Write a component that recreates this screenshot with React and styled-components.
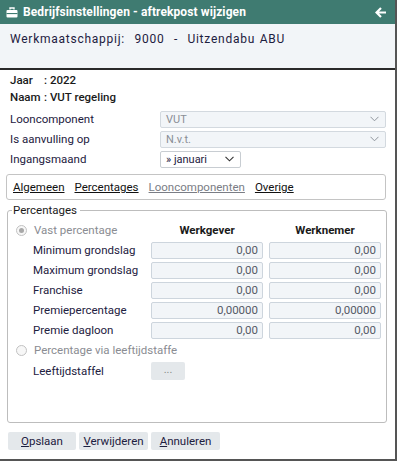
import React from "react";
import styled, { createGlobalStyle } from "styled-components";

const Global = createGlobalStyle`
  html, body { margin: 0; padding: 0; background: #ffffff; }
  body { font-family: Roboto, "Noto Sans", Arial, sans-serif; font-size: 11px; color: #1d2040; }
  * { box-sizing: border-box; }
`;

const Window = styled.div`
  width: 397px;
  height: 461px;
  border-right: 2px solid #555;
  border-bottom: 2px solid #555;
  display: flex;
  flex-direction: column;
  background: #fff;
`;

const TitleBar = styled.div`
  height: 24px;
  background: #3f7b71;
  color: #fff;
  display: flex;
  align-items: center;
  padding: 0 8px 0 6px;
  font-weight: 700;
  font-size: 12px;
  gap: 5px;
`;

const TitleText = styled.span`
  flex: 1;
  letter-spacing: 0.1px;
`;

const HeaderPanel = styled.div`
  height: 46px;
  background: #f2f5f8;
  border-bottom: 2px solid #2a2a2a;
  padding: 8px 10px 0;
  font-size: 12px;
  letter-spacing: 0.75px;
  word-spacing: 1px;
  color: #1d2040;
`;

const Info = styled.div`
  padding: 2px 10px 0;
  font-weight: 500;
  font-size: 11.5px;
  line-height: 17px;
  color: #1a1a1a;
`;

const InfoLine = styled.div`
  display: flex;
`;

const InfoKey = styled.span`
  width: ${(p) => p.w}px;
`;

const FormRows = styled.div`
  margin-top: 3px;
  padding-left: 10px;
  display: flex;
  flex-direction: column;
`;

const FormRow = styled.div`
  height: 20px;
  display: flex;
  align-items: center;
`;

const FormLabel = styled.span`
  width: 150px;
  font-size: 11.5px;
  color: #1d2040;
`;

const Select = styled.div`
  width: ${(p) => p.w}px;
  height: 17px;
  border: 1px solid ${(p) => (p.disabled ? "#d3d9df" : "#c8cdd2")};
  border-radius: 2px;
  background: ${(p) => (p.disabled ? "#f2f5f8" : "#fff")};
  color: ${(p) => (p.disabled ? "#8a8e96" : "#1d2040")};
  display: flex;
  align-items: center;
  justify-content: space-between;
  padding: 0 6px 0 5px;
  font-size: 11px;
`;

const Tabs = styled.div`
  margin: 5px 0 0 6px;
  width: 380px;
  height: 26px;
  border: 1px solid #c4c4c4;
  border-radius: 3px;
  display: flex;
  align-items: center;
  padding-left: 6px;
  gap: 10px;
  font-size: 11.5px;
`;

const Tab = styled.span`
  text-decoration: underline;
  color: ${(p) => (p.muted ? "#7a7d85" : "#111")};
`;

const Fieldset = styled.fieldset`
  margin: 2px 0 0 7px;
  width: 380px;
  height: 221px;
  border: 1px solid #bdbdbd;
  border-radius: 3px;
  padding: 2px 0 0 8px;
`;

const Legend = styled.legend`
  padding: 0 3px 0 1px;
  margin-left: -4px;
  font-size: 11.5px;
  line-height: 16px;
  color: #1a1a1a;
`;

const Row = styled.div`
  height: 20px;
  display: flex;
  align-items: center;
  margin-top: ${(p) => p.mt || 0}px;
`;

const RowLabel = styled.span`
  width: 135px;
  flex-shrink: 0;
  padding-left: ${(p) => (p.indent ? 17 : 0)}px;
  display: flex;
  align-items: center;
  gap: 7px;
  font-size: 11.5px;
  color: ${(p) => (p.muted ? "#8a8c92" : "#1d2040")};
  white-space: nowrap;
`;

const ColHead = styled.span`
  width: 112px;
  text-align: center;
  font-weight: 700;
  font-size: 11.5px;
  color: #1a1a1a;
  & + & { margin-left: 6px; }
`;

const NumBox = styled.div`
  width: 112px;
  height: 17px;
  border: 1px solid #cdd5dd;
  border-radius: 2px;
  background: #f2f5f8;
  color: #555a66;
  text-align: right;
  padding-right: 4px;
  line-height: 15px;
  font-size: 11.5px;
  & + & { margin-left: 6px; }
`;

const Radio = styled.span`
  flex-shrink: 0;
  width: 11px;
  height: 11px;
  border-radius: 50%;
  border: 1px solid #c2c2c2;
  background: #f7f7f7;
  display: inline-flex;
  align-items: center;
  justify-content: center;
  &::after {
    content: "";
    width: 5px;
    height: 5px;
    border-radius: 50%;
    background: ${(p) => (p.checked ? "#a8a8a8" : "transparent")};
  }
`;

const SmallButton = styled.div`
  width: 34px;
  height: 18px;
  border-radius: 2px;
  background: #e4e8eb;
  color: #888;
  display: flex;
  align-items: center;
  justify-content: center;
  font-size: 11px;
  padding-bottom: 3px;
`;

const ButtonBar = styled.div`
  margin: 9px 0 0 8px;
  display: flex;
  gap: 3px;
`;

const Button = styled.div`
  width: ${(p) => p.w}px;
  height: 18px;
  border-radius: 2px;
  background: #e4e8eb;
  color: #1d2040;
  font-size: 11.5px;
  display: flex;
  align-items: center;
  justify-content: center;
  & u { text-decoration: underline; }
`;

const Chevron = () => (
  <svg width="9" height="6" viewBox="0 0 9 6">
    <path d="M0.5 0.8 L4.5 4.8 L8.5 0.8" fill="none" stroke="#8f959c" strokeWidth="1" />
  </svg>
);

const DarkChevron = () => (
  <svg width="9" height="6" viewBox="0 0 9 6">
    <path d="M0.5 0.8 L4.5 4.8 L8.5 0.8" fill="none" stroke="#333" strokeWidth="1.1" />
  </svg>
);

const ToolboxIcon = () => (
  <svg width="12" height="11" viewBox="0 0 12 11">
    <path d="M4 2.5 V1 H8 V2.5" fill="none" stroke="#fff" strokeWidth="1.4" />
    <rect x="0.5" y="3" width="11" height="7.5" rx="1" fill="#fff" />
    <rect x="0.5" y="6" width="11" height="1.1" fill="#3f7b71" />
  </svg>
);

const BackArrow = () => (
  <svg width="12" height="11" viewBox="0 0 12 11">
    <path d="M11 5.5 H2 M6 1 L1.5 5.5 L6 10" fill="none" stroke="#fff" strokeWidth="2.2" strokeLinejoin="miter" />
  </svg>
);

const rows = [
  ["Minimum grondslag", "0,00", "0,00"],
  ["Maximum grondslag", "0,00", "0,00"],
  ["Franchise", "0,00", "0,00"],
  ["Premiepercentage", "0,00000", "0,00000"],
  ["Premie dagloon", "0,00", "0,00"],
];

export default function App() {
  return (
    <>
      <Global />
      <Window>
        <TitleBar>
          <ToolboxIcon />
          <TitleText>Bedrijfsinstellingen - aftrekpost wijzigen</TitleText>
          <BackArrow />
        </TitleBar>
        <HeaderPanel>Werkmaatschappij:&nbsp; 9000 &nbsp;- &nbsp;Uitzendabu ABU</HeaderPanel>
        <Info>
          <InfoLine>
            <InfoKey w={34}>Jaar</InfoKey>
            <span>: 2022</span>
          </InfoLine>
          <InfoLine>
            <InfoKey w={34}>Naam</InfoKey>
            <span>: VUT regeling</span>
          </InfoLine>
        </Info>
        <FormRows>
          <FormRow>
            <FormLabel>Looncomponent</FormLabel>
            <Select w={226} disabled>
              <span>VUT</span>
              <Chevron />
            </Select>
          </FormRow>
          <FormRow>
            <FormLabel>Is aanvulling op</FormLabel>
            <Select w={226} disabled>
              <span>N.v.t.</span>
              <Chevron />
            </Select>
          </FormRow>
          <FormRow>
            <FormLabel>Ingangsmaand</FormLabel>
            <Select w={81}>
              <span>» januari</span>
              <DarkChevron />
            </Select>
          </FormRow>
        </FormRows>
        <Tabs>
          <Tab>Algemeen</Tab>
          <Tab>Percentages</Tab>
          <Tab muted>Looncomponenten</Tab>
          <Tab>Overige</Tab>
        </Tabs>
        <Fieldset>
          <Legend>Percentages</Legend>
          <Row>
            <RowLabel muted>
              <Radio checked />
              Vast percentage
            </RowLabel>
            <ColHead>Werkgever</ColHead>
            <ColHead>Werknemer</ColHead>
          </Row>
          {rows.map(([label, a, b]) => (
            <Row key={label}>
              <RowLabel indent>{label}</RowLabel>
              <NumBox>{a}</NumBox>
              <NumBox>{b}</NumBox>
            </Row>
          ))}
          <Row>
            <RowLabel muted>
              <Radio />
              Percentage via leeftijdstaffe
            </RowLabel>
          </Row>
          <Row mt={1}>
            <RowLabel indent>Leeftijdstaffel</RowLabel>
            <SmallButton>...</SmallButton>
          </Row>
        </Fieldset>
        <ButtonBar>
          <Button w={68}>
            <span><u>O</u>pslaan</span>
          </Button>
          <Button w={69}>
            <span><u>V</u>erwijderen</span>
          </Button>
          <Button w={69}>
            <span><u>A</u>nnuleren</span>
          </Button>
        </ButtonBar>
      </Window>
    </>
  );
}
